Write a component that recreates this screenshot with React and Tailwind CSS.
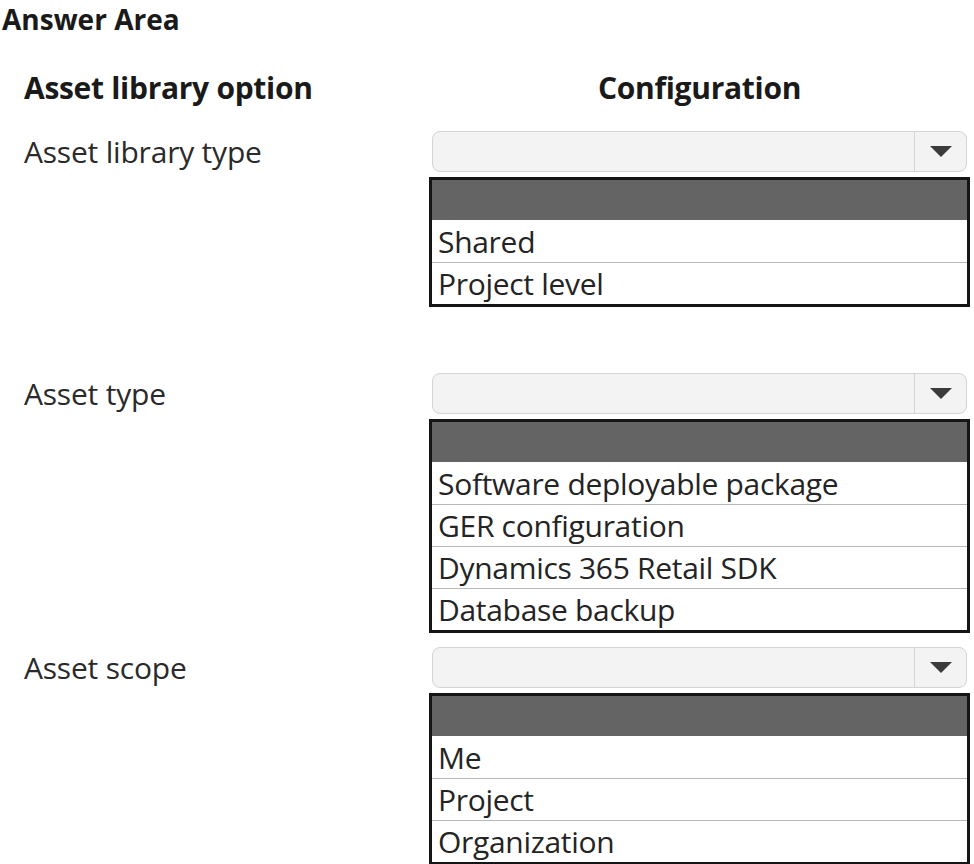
const font = { fontFamily: '"Open Sans", "Noto Sans", sans-serif' };

const Arrow = () => (
  <svg width="22" height="11" viewBox="0 0 22 11">
    <path d="M0 0h22L11 11z" fill="#3b3b3b" />
  </svg>
);

function Dropdown({ options }) {
  return (
    <div className="flex flex-col">
      <div className="mx-[3px] flex h-[41px] rounded-[8px] border border-[#d4d4d4] bg-[#f3f3f3]">
        <div className="flex-1" />
        <div className="flex w-[52px] items-center justify-center border-l border-[#d4d4d4]">
          <Arrow />
        </div>
      </div>
      <div className="mt-[5px] border-[3px] border-[#151515] bg-white">
        <div className="h-[40px] bg-[#646464]" />
        {options.map((o, i) => (
          <div
            key={o}
            className={`h-[42px] pl-[6px] text-[30px] leading-[41px] tracking-[-0.3px] text-[#242424] ${i > 0 ? 'border-t border-[#b8b8b8]' : 'pt-px'}`}
          >
            {o}
          </div>
        ))}
      </div>
    </div>
  );
}

function Row({ label, options, className }) {
  return (
    <div className={`grid grid-cols-[429px_541px] ${className}`}>
      <div className="pl-[24px] text-[30px] leading-[41px] tracking-[-0.2px] text-[#2a2a2a]">{label}</div>
      <Dropdown options={options} />
    </div>
  );
}

export default function App() {
  return (
    <div className="min-h-screen w-[974px] bg-white pt-[3px] text-[#1a1a1a]" style={font}>
      <div className="pl-[2px] text-[28px] font-bold leading-[32px] tracking-[0px]">Answer Area</div>
      <div className="mt-[33px] grid grid-cols-[429px_541px] text-[30px] font-bold leading-[40px] tracking-[-0.3px]">
        <div className="pl-[24px]">Asset library option</div>
        <div className="text-center">Configuration</div>
      </div>
      <Row className="mt-[23px]" label="Asset library type" options={['Shared', 'Project level']} />
      <Row
        className="mt-[66px]"
        label="Asset type"
        options={['Software deployable package', 'GER configuration', 'Dynamics 365 Retail SDK', 'Database backup']}
      />
      <Row className="mt-[14px]" label="Asset scope" options={['Me', 'Project', 'Organization']} />
    </div>
  );
}
